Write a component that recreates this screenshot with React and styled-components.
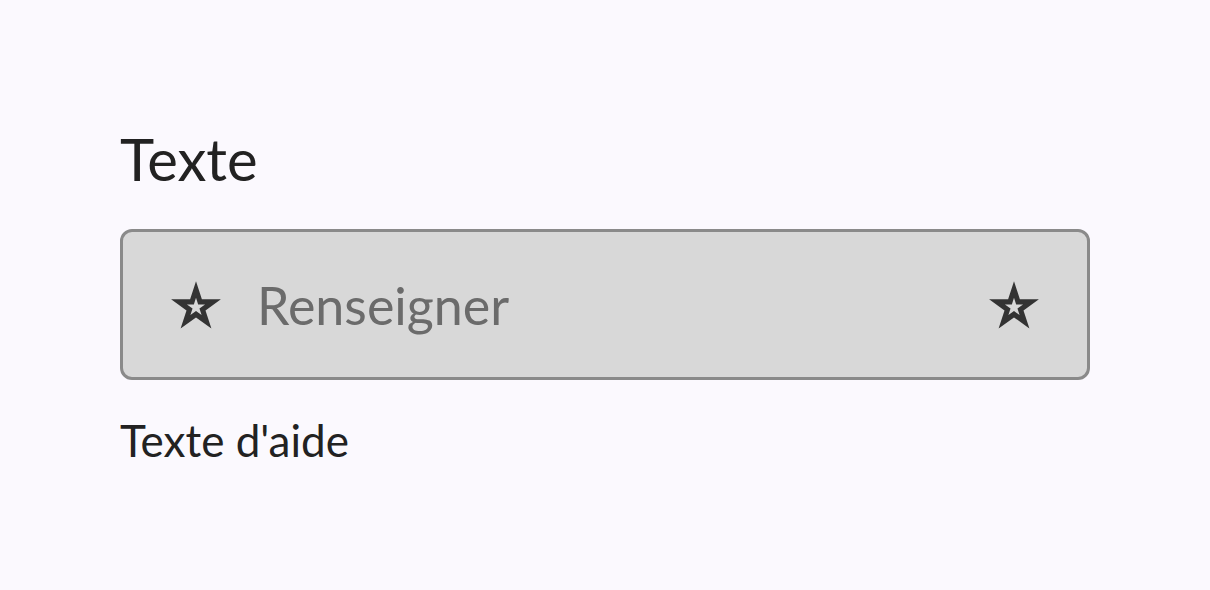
import styled, { createGlobalStyle } from "styled-components";

const GlobalStyle = createGlobalStyle`
  html, body {
    margin: 0;
    padding: 0;
    background: #fbf9fe;
    font-family: Lato, "Open Sans", sans-serif;
  }
`;

function StarIcon() {
  return (
    <svg width="50" height="48" viewBox="1.5 2 21 20" fill="#333333">
      <path
        fillRule="evenodd"
        d="M12 2 L14.47 9.6 L22.46 9.6 L15.99 14.3 L18.47 21.9 L12 17.2 L5.53 21.9 L8.01 14.3 L1.54 9.6 L9.53 9.6 Z
           M12 9 L11.1 11.76 L8.2 11.76 L10.55 13.47 L9.65 16.23 L12 14.52 L14.35 16.23 L13.45 13.47 L15.8 11.76 L12.9 11.76 Z"
      />
    </svg>
  );
}

export default function App() {
  return (
    <>
      <GlobalStyle />
      <Page>
        <Field>
          <Label>Texte</Label>
          <InputBox>
            <IconSlot>
              <StarIcon />
            </IconSlot>
            <Input placeholder="Renseigner" />
            <IconSlot>
              <StarIcon />
            </IconSlot>
          </InputBox>
          <Helper>Texte d'aide</Helper>
        </Field>
      </Page>
    </>
  );
}

const Page = styled.div`
  width: 1210px;
  height: 590px;
  padding: 119px 120px 0 120px;
  box-sizing: border-box;
`;

const Field = styled.div`
  display: flex;
  flex-direction: column;
  width: 970px;
`;

const Label = styled.label`
  font-size: 58px;
  line-height: 80px;
  color: #222222;
  margin-bottom: 30px;
`;

const InputBox = styled.div`
  display: flex;
  align-items: center;
  gap: 36px;
  height: 151px;
  box-sizing: border-box;
  padding: 0 48px;
  background: #d8d8d8;
  border: 3px solid #8a8a8a;
  border-radius: 12px;
`;

const IconSlot = styled.span`
  display: flex;
  align-items: center;
  justify-content: center;
  width: 50px;
`;

const Input = styled.input`
  flex: 1;
  border: none;
  outline: none;
  background: transparent;
  font-family: Lato, "Open Sans", sans-serif;
  font-size: 52px;
  color: #222222;
  padding: 0;

  &::placeholder {
    color: #6b6b6b;
  }
`;

const Helper = styled.div`
  margin-top: 36px;
  font-size: 44px;
  line-height: 48px;
  color: #222222;
`;
